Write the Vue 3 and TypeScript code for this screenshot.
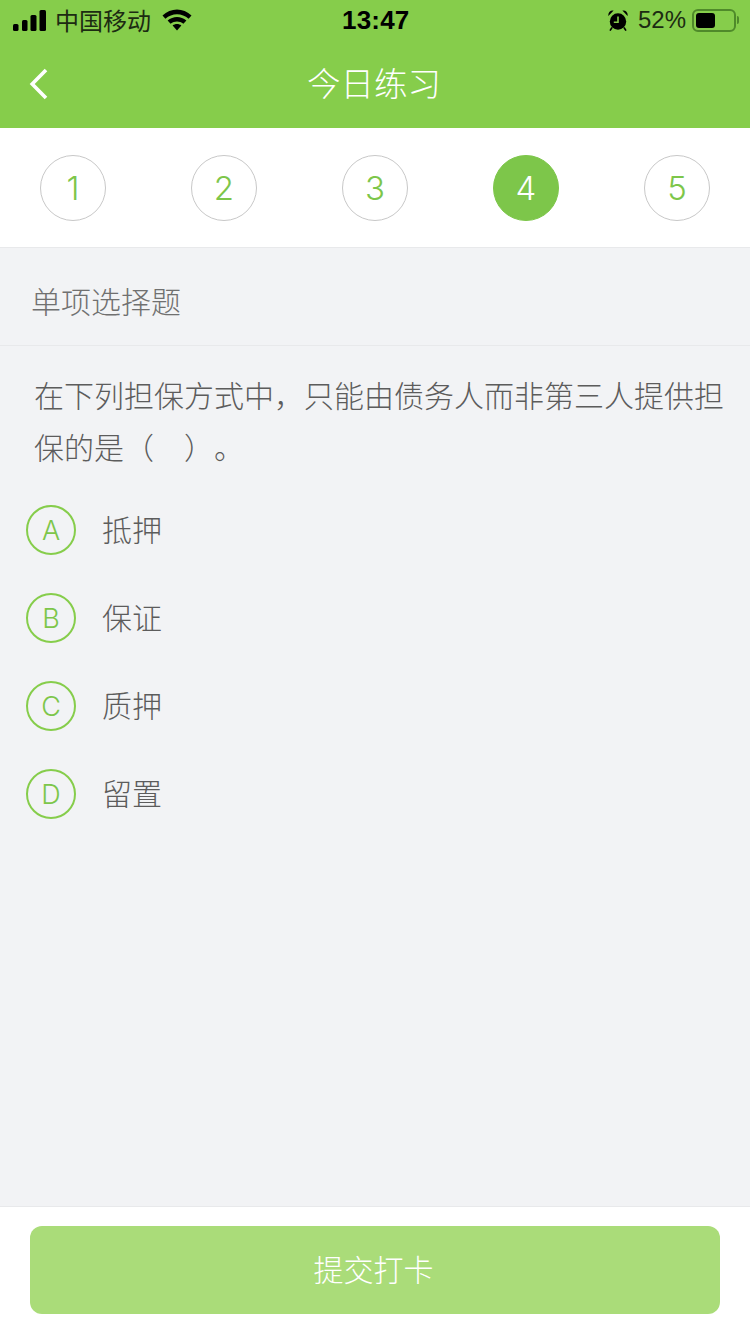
<script setup lang="ts">
import { ref } from "vue";

const steps = ref([1, 2, 3, 4, 5]);
const current = ref(4);

const options = ref([
  { key: "A", text: "抵押" },
  { key: "B", text: "保证" },
  { key: "C", text: "质押" },
  { key: "D", text: "留置" },
]);
</script>

<template>
  <div class="page">
    <header class="top">
      <div class="status-bar">
        <div class="status-left">
          <svg class="signal" width="33" height="21" viewBox="0 0 33 21">
            <rect x="0" y="14" width="5.5" height="7" rx="1.5" />
            <rect x="9" y="10" width="5.5" height="11" rx="1.5" />
            <rect x="17.5" y="5" width="6" height="16" rx="1.5" />
            <rect x="26.5" y="0" width="6.5" height="21" rx="1.5" />
          </svg>
          <span class="carrier">中国移动</span>
          <svg class="wifi" width="30" height="22" viewBox="0 0 30 22">
            <path d="M0.5 6.6C8.6 -1.4 21.4 -1.4 29.5 6.6L26.6 9.8C20 3.6 10 3.6 3.4 9.8Z" />
            <path d="M5.6 11.6C11 6.8 19 6.8 24.4 11.6L21.4 14.8C17.6 11.6 12.4 11.6 8.6 14.8Z" />
            <path d="M10.6 16.4C13.2 14.4 16.8 14.4 19.4 16.4L15 21.5Z" />
          </svg>
        </div>
        <span class="time">13:47</span>
        <div class="status-right">
          <svg class="alarm" width="20" height="21" viewBox="0 0 20 21">
            <circle cx="10" cy="11.5" r="8.2" />
            <path d="M0.4 6C-0.2 2.4 2.4 0 5.6 0.6Z" />
            <path d="M19.6 6C20.2 2.4 17.6 0 14.4 0.6Z" />
            <path d="M4 17.5L2 20.6M16 17.5L18 20.6" stroke="#000" stroke-width="1.6" />
            <path d="M10 6.5V12.2H5.8" fill="none" stroke="#86cd4b" stroke-width="1.6" />
          </svg>
          <span class="battery-text">52%</span>
          <div class="battery">
            <div class="battery-fill"></div>
          </div>
          <div class="battery-tip"></div>
        </div>
      </div>
      <div class="nav-bar">
        <svg class="back" width="20" height="32" viewBox="0 0 20 32">
          <path d="M17 2L3.2 16L17 30" fill="none" stroke="#fff" stroke-width="3.6" />
        </svg>
        <h1 class="title">今日练习</h1>
      </div>
    </header>

    <nav class="steps">
      <div
        v-for="n in steps"
        :key="n"
        class="step"
        :class="{ active: n === current }"
      >
        {{ n }}
      </div>
    </nav>

    <main class="content">
      <div class="section-title"><span class="section-text">单项选择题</span></div>
      <p class="question">在下列担保方式中，只能由债务人而非第三人提供担保的是（&ensp;&ensp;）。</p>
      <ul class="options">
        <li v-for="opt in options" :key="opt.key" class="option">
          <span class="option-key">{{ opt.key }}</span>
          <span class="option-text">{{ opt.text }}</span>
        </li>
      </ul>
    </main>

    <footer class="footer">
      <button class="submit" type="button">提交打卡</button>
    </footer>
  </div>
</template>

<style>
html,
body {
  margin: 0;
  background: #f2f3f5;
}
</style>

<style scoped>
.page {
  width: 750px;
  height: 1334px;
  display: flex;
  flex-direction: column;
  background: #f2f3f5;
  font-family: "Liberation Sans", "Noto Sans CJK SC", sans-serif;
  overflow: hidden;
}
.top {
  background: #86cd4b;
  height: 128px;
  flex: none;
}
.status-bar {
  height: 40px;
  position: relative;
  display: flex;
  align-items: center;
  justify-content: space-between;
  color: #000;
  padding: 0 11px 0 13px;
}
.status-left,
.status-right {
  display: flex;
  align-items: center;
}
.signal {
  margin-right: 9px;
}
.carrier {
  font-size: 24px;
  color: #1c2b12;
  padding-bottom: 2px;
}
.wifi {
  margin-left: 11px;
}
.time {
  position: absolute;
  left: 342px;
  font-size: 26px;
  font-weight: 700;
  letter-spacing: 0.2px;
}
.alarm {
  margin-right: 10px;
}
.battery-text {
  font-size: 24px;
  color: #1c2b12;
}
.battery {
  box-sizing: border-box;
  width: 44px;
  height: 23px;
  margin-left: 6px;
  border: 2px solid #4f8a2a;
  border-radius: 6px;
  padding: 2px;
}
.battery-fill {
  width: 19px;
  height: 15px;
  background: #000;
  border-radius: 3px;
}
.battery-tip {
  width: 2px;
  height: 8px;
  margin-left: 1px;
  background: #4f8a2a;
  border-radius: 0 2px 2px 0;
}
.nav-bar {
  height: 88px;
  position: relative;
  display: flex;
  align-items: center;
  justify-content: center;
}
.back {
  position: absolute;
  left: 29px;
  top: 28px;
}
.title {
  margin: 0;
  padding: 0 2px 6px 0;
  font-size: 33.5px;
  font-weight: 300;
  color: #fff;
}
.steps {
  flex: none;
  box-sizing: border-box;
  height: 120px;
  background: #fff;
  border-bottom: 1px solid #e8e9eb;
  padding: 27px 40px 0;
  display: flex;
  justify-content: space-between;
  align-items: flex-start;
}
.step {
  box-sizing: border-box;
  width: 66px;
  height: 66px;
  border: 1px solid #c8c8c8;
  border-radius: 50%;
  display: flex;
  align-items: center;
  justify-content: center;
  font-family: Inter, "Liberation Sans", sans-serif;
  font-size: 33px;
  font-weight: 300;
  color: #7dc64a;
}
.step.active {
  background: #7dc64a;
  border-color: #7dc64a;
  color: #fff;
}
.content {
  flex: 1;
  min-height: 0;
}
.section-title {
  box-sizing: border-box;
  height: 98px;
  padding: 0 31px;
  border-bottom: 1px solid #e8e9eb;
  display: flex;
  align-items: center;
  font-size: 30px;
  font-weight: 300;
  color: #707070;
}
.section-text {
  padding-top: 6px;
}
.question {
  margin: 25px 20px 0 34px;
  font-size: 30px;
  font-weight: 300;
  line-height: 52px;
  color: #5c5c5c;
  text-spacing-trim: space-all;
}
.options {
  list-style: none;
  margin: 11px 0 0;
  padding: 0 0 0 26px;
}
.option {
  height: 88px;
  display: flex;
  align-items: center;
}
.option-key {
  box-sizing: border-box;
  width: 50px;
  height: 50px;
  border: 2px solid #86cd4b;
  border-radius: 50%;
  display: flex;
  align-items: center;
  justify-content: center;
  font-family: Inter, "Liberation Sans", sans-serif;
  font-size: 27px;
  font-weight: 300;
  color: #7dc64a;
}
.option-text {
  margin-left: 26px;
  padding-bottom: 4px;
  font-size: 30px;
  font-weight: 300;
  color: #5c5c5c;
}
.footer {
  flex: none;
  box-sizing: border-box;
  height: 128px;
  background: #fff;
  border-top: 1px solid #e8e9eb;
  padding: 19px 30px 0;
}
.submit {
  display: block;
  width: 100%;
  height: 88px;
  border: none;
  border-radius: 12px;
  padding: 0 3px 4px 0;
  background: #aadc79;
  color: #fff;
  font-family: inherit;
  font-size: 30px;
  font-weight: 300;
}
</style>
